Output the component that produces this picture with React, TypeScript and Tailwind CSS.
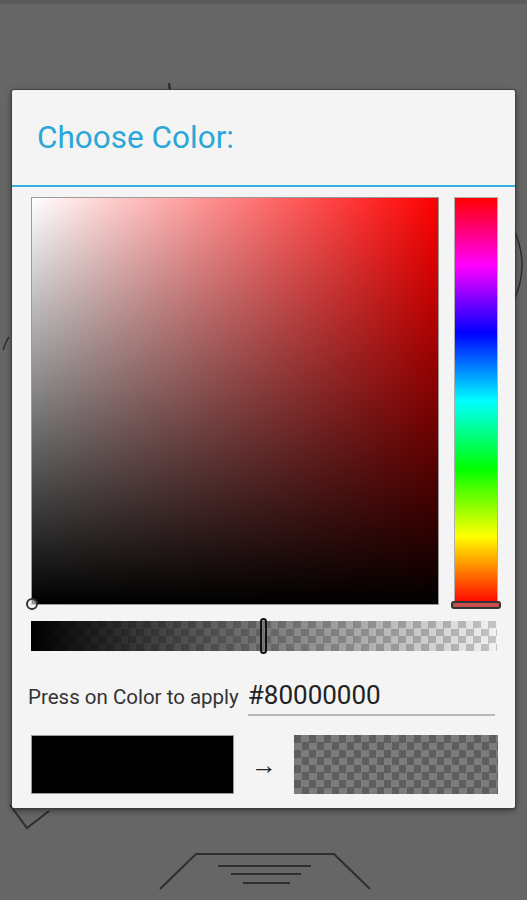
export default function App() {
  return (
    <div className="relative min-h-[900px] w-full overflow-hidden bg-[#666666] font-['Roboto','Liberation_Sans',sans-serif]">
      <div className="h-[4px] bg-[#5a5a5a]" />

      {/* faint drawing behind the dialog */}
      <svg className="absolute inset-0" width="527" height="900" viewBox="0 0 527 900" fill="none" stroke="#2e2e2e" strokeWidth="2">
        <path d="M169 83 L170 91" strokeWidth="2.5" />
        <path d="M3 350 L6 342 L9 337" strokeWidth="1.5" />
        <path d="M514 230 Q530 265 514 300" strokeWidth="1.5" />
        <path d="M10 805 L27 828 L49 811" />
        <path d="M160 889 L196 854 L334 854 L370 889" />
        <path d="M218 866 L311 866" />
        <path d="M231 874 L301 874" />
        <path d="M243 883 L290 883" />
      </svg>

      <div className="relative ml-[12px] mt-[86px] w-[503px] rounded-[2px] bg-[#f4f4f4] shadow-[0_2px_6px_rgba(0,0,0,0.55)] ring-1 ring-[#3a3a3a]/70">
        <div className="flex h-[95px] items-center pl-[25px]">
          <h1 className="text-[31.5px] leading-none text-[#2ba6d7]">Choose Color:</h1>
        </div>
        <div className="h-[2px] bg-[#33b0e0]" />

        <div className="pl-[19px] pr-[17px] pt-[10px] pb-[14px]">
          <div className="flex gap-[15px]">
            <div className="relative h-[408px] w-[408px] border border-[#9a9a9a] bg-[image:linear-gradient(to_bottom,transparent,#000),linear-gradient(to_right,#fff,#f00)]">
              <div className="absolute -bottom-[6px] -left-[6px] h-[12px] w-[12px] rounded-full border-2 border-[#333] bg-[#f4f4f4]/60" />
            </div>
            <div className="relative h-[408px] w-[44px] border border-[#b0b0b0] bg-[image:linear-gradient(to_bottom,#f00,#f0f,#00f,#0ff,#0f0,#ff0,#f00)]">
              <div className="absolute -bottom-[5px] -left-[4px] -right-[4px] h-[8px] rounded-[3px] border-2 border-[#333] bg-[#c9504d]" />
            </div>
          </div>

          <div className="relative mt-[16px] h-[30px] w-[466px] bg-[image:conic-gradient(#c4c4c4_25%,#f2f2f2_0_50%,#c4c4c4_0_75%,#f2f2f2_0)] bg-[length:15px_15px]">
            <div className="h-full w-full bg-[image:linear-gradient(to_right,#000,transparent)]" />
            <div className="absolute left-[229px] top-[-3px] h-[36px] w-[7px] rounded-full border-2 border-[#111] bg-[#888]/40" />
          </div>

          <div className="-ml-[3px] mt-[30px] flex items-baseline gap-[9px]">
            <span className="text-[20.5px] text-[#333]">Press on Color to apply</span>
            <div className="mr-[3px] flex-1 border-b-2 border-[#b8b8b8] pb-[3px]">
              <span className="text-[26px] leading-[28px] text-[#222]">#80000000</span>
            </div>
          </div>

          <div className="mt-[19px] grid grid-cols-[203px_60px_1fr] items-center">
            <div className="h-[59px] border border-[#999] bg-black" />
            <div className="text-center text-[26px] leading-none text-[#222]">→</div>
            <div className="h-[59px] bg-[image:conic-gradient(#7c7c7c_25%,#5e5e5e_0_50%,#7c7c7c_0_75%,#5e5e5e_0)] bg-[length:15px_15px]" />
          </div>
        </div>
      </div>
    </div>
  );
}
